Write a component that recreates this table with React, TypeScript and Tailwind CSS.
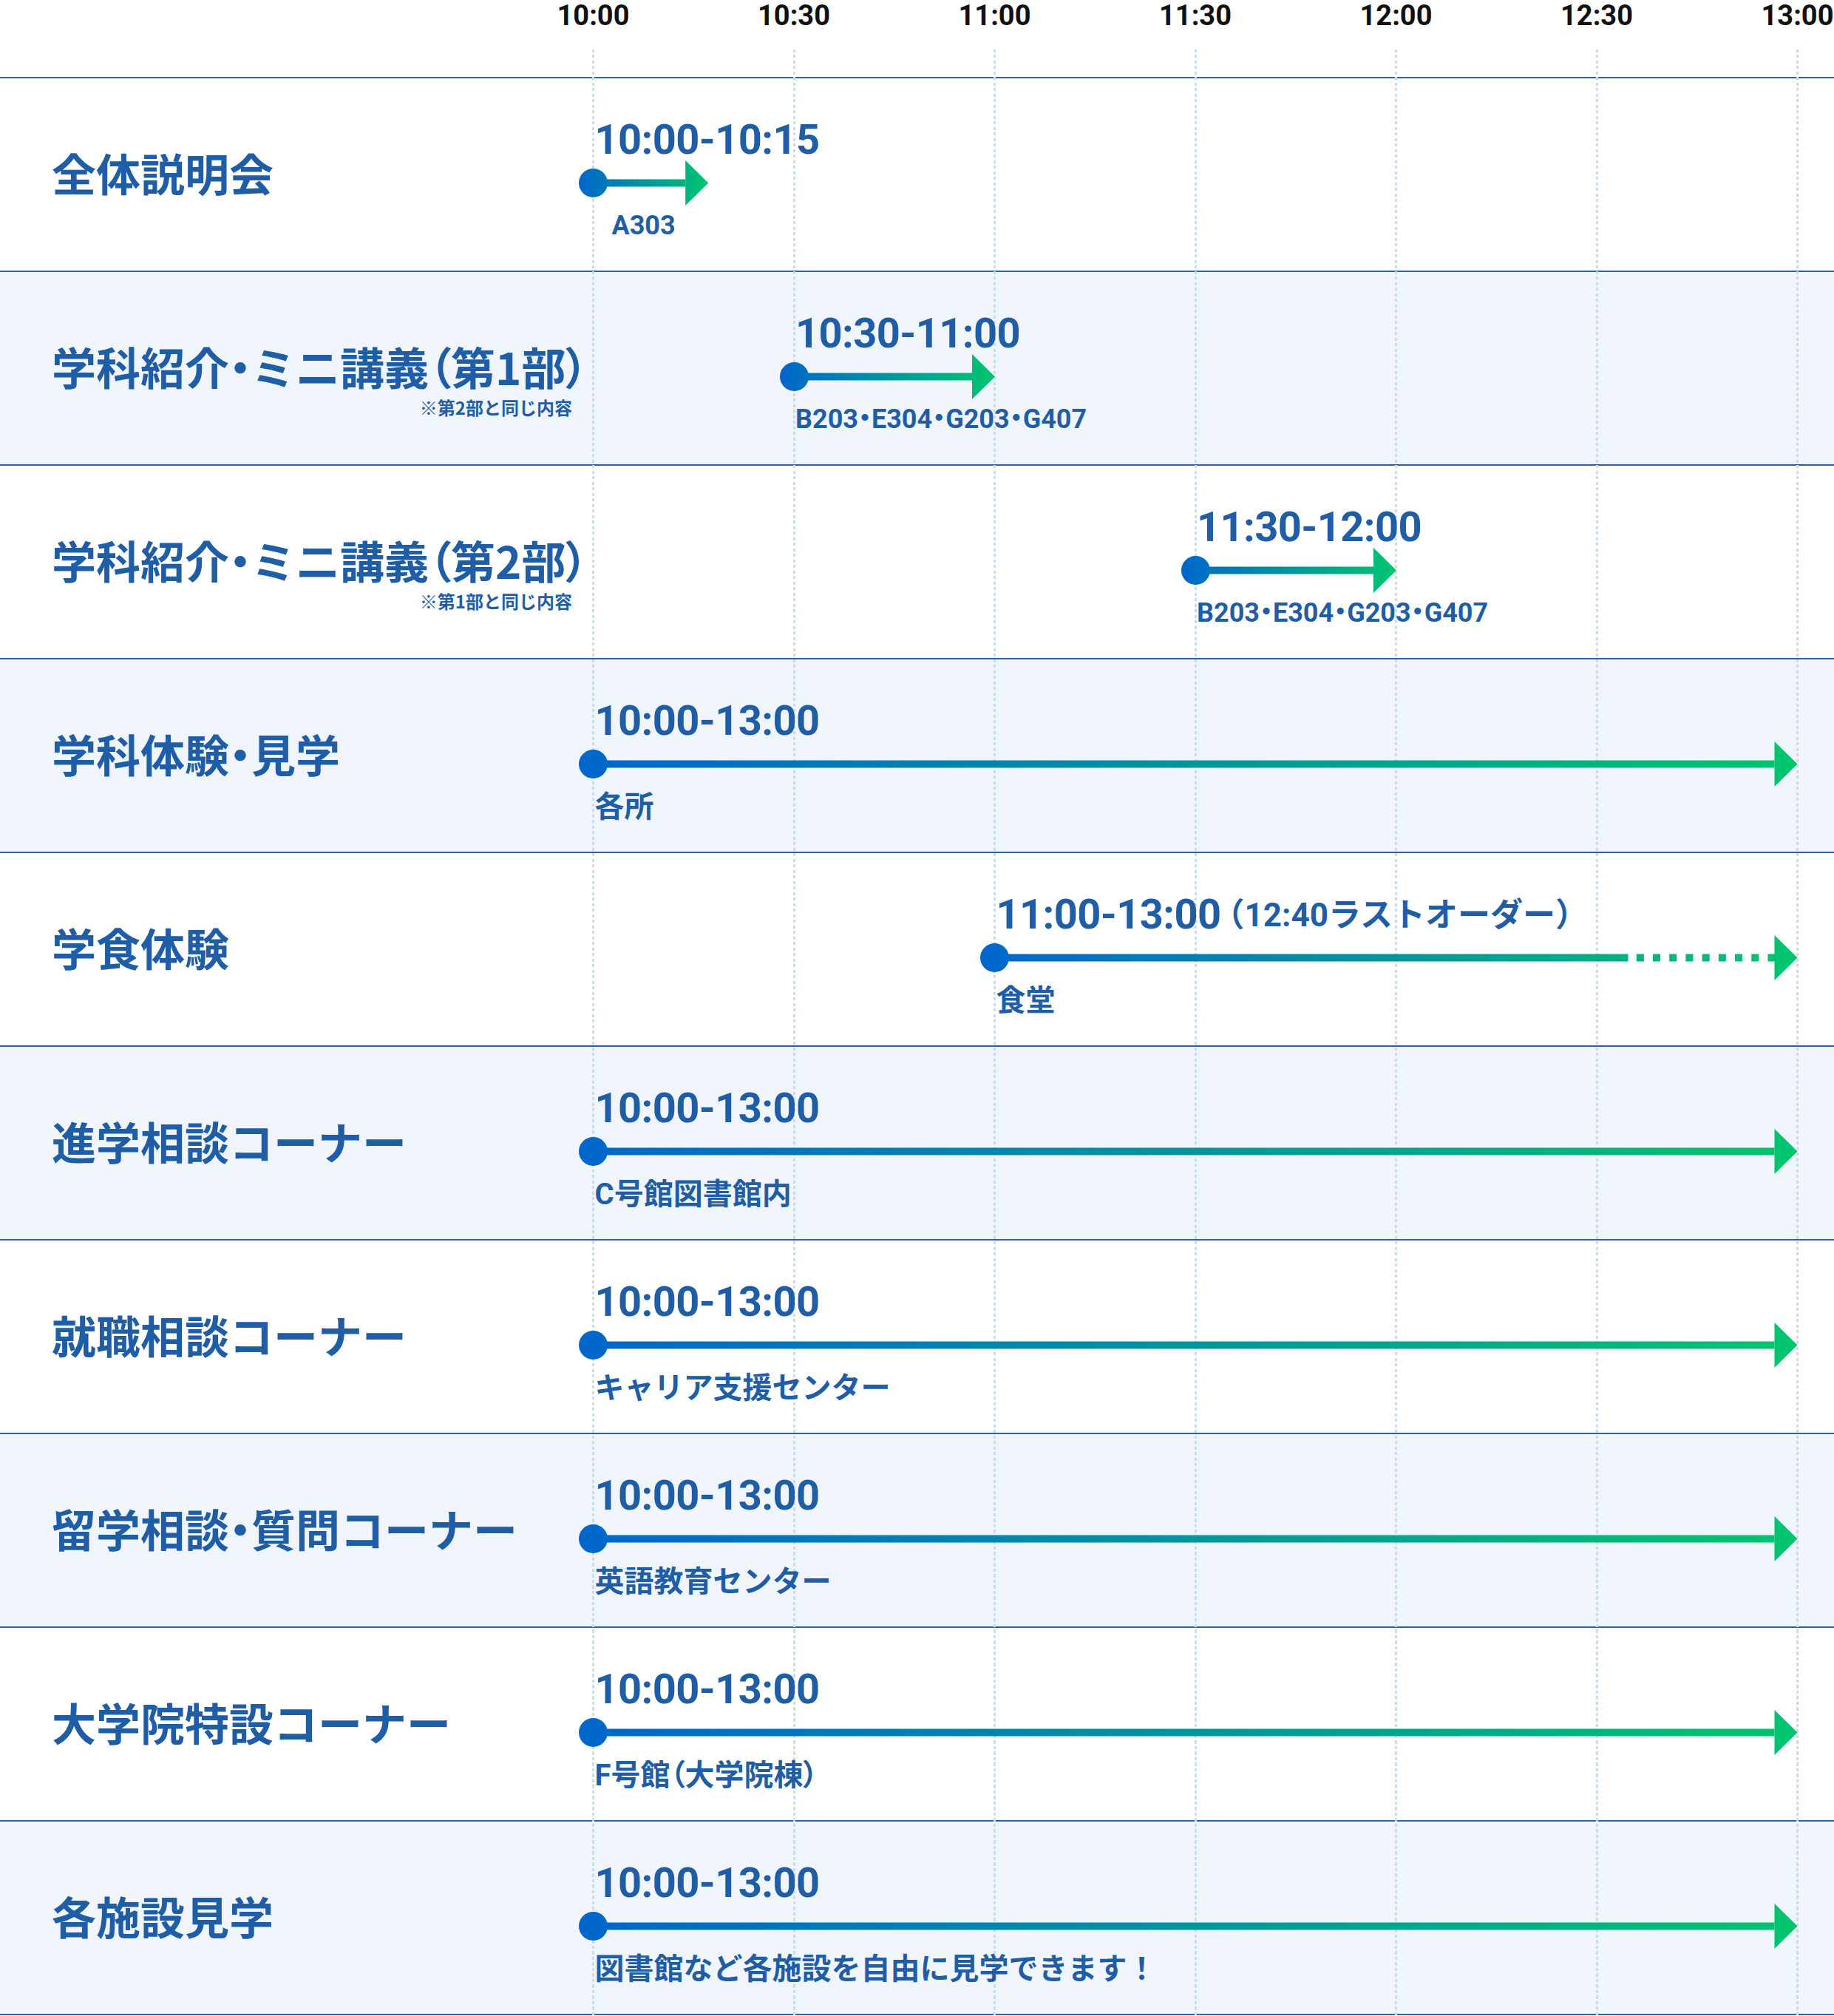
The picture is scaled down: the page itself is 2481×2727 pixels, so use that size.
const HALF = 271.5;
const DOT = 19.5;

type Row = {
  label: string;
  note?: string;
  time: string;
  extra?: string;
  place: string;
  start: number;
  end: number;
  dashFrom?: number;
  center?: boolean;
  small?: boolean;
  palt?: boolean;
};

const hours = ["10:00", "10:30", "11:00", "11:30", "12:00", "12:30", "13:00"];

const rows: Row[] = [
  { label: "全体説明会", time: "10:00-10:15", place: "A303", start: 0, end: 17.2, center: true, small: true },
  { label: "学科紹介・ミニ講義（第1部）", note: "※第2部と同じ内容", time: "10:30-11:00", place: "B203・E304・G203・G407", start: 30, end: 60, small: true, palt: true },
  { label: "学科紹介・ミニ講義（第2部）", note: "※第1部と同じ内容", time: "11:30-12:00", place: "B203・E304・G203・G407", start: 90, end: 120, small: true, palt: true },
  { label: "学科体験・見学", time: "10:00-13:00", place: "各所", start: 0, end: 180 },
  { label: "学食体験", time: "11:00-13:00", extra: "（12:40ラストオーダー）", place: "食堂", start: 60, end: 180, dashFrom: 154.7 },
  { label: "進学相談コーナー", time: "10:00-13:00", place: "C号館図書館内", start: 0, end: 180 },
  { label: "就職相談コーナー", time: "10:00-13:00", place: "キャリア支援センター", start: 0, end: 180 },
  { label: "留学相談・質問コーナー", time: "10:00-13:00", place: "英語教育センター", start: 0, end: 180 },
  { label: "大学院特設コーナー", time: "10:00-13:00", place: "F号館（大学院棟）", start: 0, end: 180, palt: true },
  { label: "各施設見学", time: "10:00-13:00", place: "図書館など各施設を自由に見学できます！", start: 0, end: 180 },
];

const px = (min: number) => (min / 30) * HALF;

// only the dot and brackets are set narrow, kana keep full width
function Label({ text }: { text: string }) {
  const parts = text.split(/([・（）])/).filter(Boolean);
  return (
    <>
      {parts.map((p, i) =>
        "・（）".includes(p) ? (
          <span key={i} className="[font-feature-settings:'palt']">
            {p}
          </span>
        ) : (
          <span key={i}>{p}</span>
        )
      )}
    </>
  );
}

function Bar({ id, start, end, dashFrom }: { id: string; start: number; end: number; dashFrom?: number }) {
  const w = px(end) - px(start) + DOT;
  const base = w - 31;
  const solidEnd = dashFrom ? px(dashFrom) - px(start) + DOT : base;
  const squares: number[] = [];
  if (dashFrom) {
    for (let x = solidEnd + 11.3; x < base; x += 22.2) squares.push(x);
  }
  return (
    <svg width={w} height={61} className="block">
      <defs>
        <linearGradient id={id} gradientUnits="userSpaceOnUse" x1="0" y1="0" x2={w} y2="0">
          <stop offset="0" stopColor="#0066cc" />
          <stop offset="1" stopColor="#00c56e" />
        </linearGradient>
      </defs>
      <circle cx={DOT} cy={30.5} r={19.5} fill={`url(#${id})`} />
      <rect x={DOT} y={25.5} width={solidEnd - DOT} height={10} fill={`url(#${id})`} />
      {squares.map((x) => (
        <rect key={x} x={x} y={25.5} width={10} height={10} fill={`url(#${id})`} />
      ))}
      <polygon points={`${base},0 ${w},30.5 ${base},61`} fill={`url(#${id})`} />
    </svg>
  );
}

function ScheduleRow({ row, index }: { row: Row; index: number }) {
  const left = px(row.start);
  const barWidth = px(row.end) - left + DOT;
  return (
    <div className={`flex h-[262px] border-b-2 border-[#2a62a5] ${index % 2 ? "bg-[#eff5fa]" : "bg-white"}`}>
      <div className="relative flex w-[783px] shrink-0 items-center pb-[6px] pl-[70px]">
        <p className="whitespace-nowrap text-[60px] leading-none font-bold">
          <Label text={row.label} />
        </p>
        {row.note ? (
          <p className="absolute top-[171px] right-[9px] whitespace-nowrap text-[24px] leading-none font-bold">{row.note}</p>
        ) : null}
      </div>
      <div className="relative flex-1 pt-[55px] font-[Roboto,'Noto_Sans_CJK_JP',sans-serif]">
        <p className="h-[56px] whitespace-nowrap text-[56px] leading-none font-bold tracking-[-0.6px]" style={{ marginLeft: left + DOT + 2 }}>
          {row.time}
          {row.extra ? <span className="ml-[-12px] align-[3px] text-[44px] tracking-normal">{row.extra}</span> : null}
        </p>
        <div style={{ marginLeft: left }}>
          <Bar id={`bar-${index}`} start={row.start} end={row.end} dashFrom={row.dashFrom} />
        </div>
        <p
          className={`whitespace-nowrap leading-none font-bold ${row.small ? "mt-[9px] text-[36px]" : "mt-[8px] text-[40px]"} ${row.palt ? "[font-feature-settings:'palt']" : ""} ${row.center ? "text-center" : ""}`}
          style={row.center ? { marginLeft: left, width: barWidth } : { marginLeft: left + DOT + 2 }}
        >
          {row.place}
        </p>
      </div>
    </div>
  );
}

export default function App() {
  return (
    <div className="relative w-[2481px] overflow-hidden bg-white font-['Noto_Sans_CJK_JP',sans-serif] text-[#1f5ea6]">
      <div className="absolute top-[67px] bottom-0 left-[801px] flex gap-[268.5px]">
        {hours.map((h) => (
          <div
            key={h}
            className="w-[3px] bg-[repeating-linear-gradient(to_bottom,#c9dced_0px,#c9dced_4px,transparent_4px,transparent_7.5px)]"
          />
        ))}
      </div>
      <div className="flex h-[106px] border-b-2 border-[#2a62a5] pt-[2px] pl-[666.75px] font-[Roboto,sans-serif] text-[38px] leading-none font-bold text-[#111111]">
        {hours.map((h) => (
          <div key={h} className="w-[271.5px] shrink-0 text-center">
            {h}
          </div>
        ))}
      </div>
      {rows.map((row, i) => (
        <ScheduleRow key={row.label} row={row} index={i} />
      ))}
    </div>
  );
}
